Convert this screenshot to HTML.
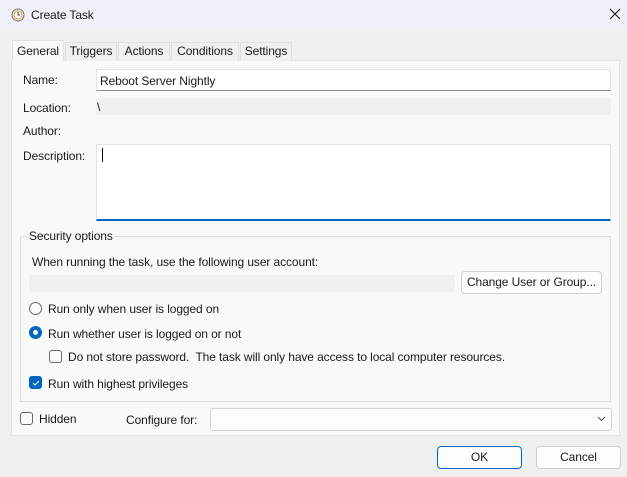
<!DOCTYPE html>
<html><head><style>
*{box-sizing:border-box;margin:0;padding:0}
body{width:627px;height:477px;background:#f0f0f0;font-family:"Liberation Sans",sans-serif;font-size:12px;letter-spacing:-0.1px;color:#1a1a1a;position:relative;overflow:hidden}
.a{position:absolute;white-space:nowrap}
.tab{position:absolute;top:42px;height:19px;border:1px solid #e0e0e0;border-bottom:none;background:#f0f0f0;text-align:center;line-height:17px}
.btn{position:absolute;background:#fdfdfd;border:1px solid #d0d0d0;border-radius:4px;text-align:center}
.cb{position:absolute;width:13px;height:13px;border:1px solid #6a6a6a;border-radius:3px;background:#fbfbfb}
.rb{position:absolute;width:13px;height:13px;border:1px solid #6a6a6a;border-radius:50%;background:#fbfbfb}
</style></head><body>
<div class="a" style="left:0;top:0;width:627px;height:30px;background:#eef2f8"></div>
<svg class="a" style="left:11px;top:8px" width="14" height="14" viewBox="0 0 14 14"><circle cx="7" cy="7" r="6" fill="#e8e8e8" stroke="#777"/><circle cx="7" cy="7" r="4" fill="#fff" stroke="#e0a040"/><path d="M7 4v3h2" stroke="#444" fill="none"/></svg>
<div class="a" style="left:31px;top:8px">Create Task</div>
<svg class="a" style="left:609px;top:8px" width="12" height="12"><path d="M1 1L11 11M11 1L1 11" stroke="#222" stroke-width="1.2"/></svg>
<div class="a" style="left:11px;top:60px;width:609px;height:376px;background:#f9f9f9;border:1px solid #e3e3e3"></div>
<div class="tab" style="left:12px;top:40px;width:52px;height:21px;background:#f9f9f9;z-index:2;line-height:20px">General</div>
<div class="tab" style="left:65px;width:52px">Triggers</div>
<div class="tab" style="left:118px;width:52px">Actions</div>
<div class="tab" style="left:171px;width:68px">Conditions</div>
<div class="tab" style="left:240px;width:52px">Settings</div>
<div class="a" style="left:23px;top:73px">Name:</div>
<div class="a" style="left:96px;top:69px;width:515px;height:22px;background:#fff;border:1px solid #e3e3e3;border-bottom:1px solid #888;padding:4px 3px">Reboot Server Nightly</div>
<div class="a" style="left:23px;top:101px">Location:</div>
<div class="a" style="left:96px;top:98px;width:515px;height:17px;background:#f0f0f0;padding:2px 1px 0">\</div>
<div class="a" style="left:23px;top:124px">Author:</div>
<div class="a" style="left:23px;top:149px">Description:</div>
<div class="a" style="left:96px;top:144px;width:515px;height:77px;background:#fff;border:1px solid #e3e3e3;border-bottom:2px solid #0067c0"></div>
<div class="a" style="left:102px;top:148px;width:1px;height:14px;background:#000"></div>
<div class="a" style="left:20px;top:236px;width:591px;height:166px;border:1px solid #dcdcdc"></div>
<div class="a" style="left:27px;top:229px;background:#f9f9f9;padding:0 2px">Security options</div>
<div class="a" style="left:32px;top:255px">When running the task, use the following user account:</div>
<div class="a" style="left:29px;top:275px;width:426px;height:17px;background:#f0f0f0"></div>
<div class="btn" style="left:461px;top:271px;width:141px;height:23px;line-height:21px">Change User or Group...</div>
<div class="rb" style="left:29px;top:302px"></div><div class="a" style="left:48px;top:302px">Run only when user is logged on</div>
<div class="rb" style="left:29px;top:326px;border:4px solid #0067c0;background:#fff"></div><div class="a" style="left:48px;top:327px">Run whether user is logged on or not</div>
<div class="cb" style="left:49px;top:350px"></div><div class="a" style="left:68px;top:350px">Do not store password.&nbsp; The task will only have access to local computer resources.</div>
<div class="cb" style="left:29px;top:376px;background:#0067c0;border-color:#0067c0"><svg width="11" height="11" style="position:absolute;left:0;top:0"><path d="M3 6l2 2 4-4" stroke="#fff" fill="none"/></svg></div><div class="a" style="left:48px;top:377px">Run with highest privileges</div>
<div class="cb" style="left:20px;top:412px"></div><div class="a" style="left:39px;top:412px">Hidden</div>
<div class="a" style="left:126px;top:413px">Configure for:</div>
<div class="a" style="left:210px;top:408px;width:402px;height:23px;background:#fdfdfd;border:1px solid #d5d5d5;border-radius:3px"></div>
<svg class="a" style="left:597px;top:416px" width="9" height="6"><path d="M1 1l3.5 3.5L8 1" stroke="#555" fill="none"/></svg>
<div class="btn" style="left:437px;top:446px;width:85px;height:23px;line-height:21px;border-color:#0067c0">OK</div>
<div class="btn" style="left:536px;top:446px;width:85px;height:23px;line-height:21px">Cancel</div>
</body></html>
